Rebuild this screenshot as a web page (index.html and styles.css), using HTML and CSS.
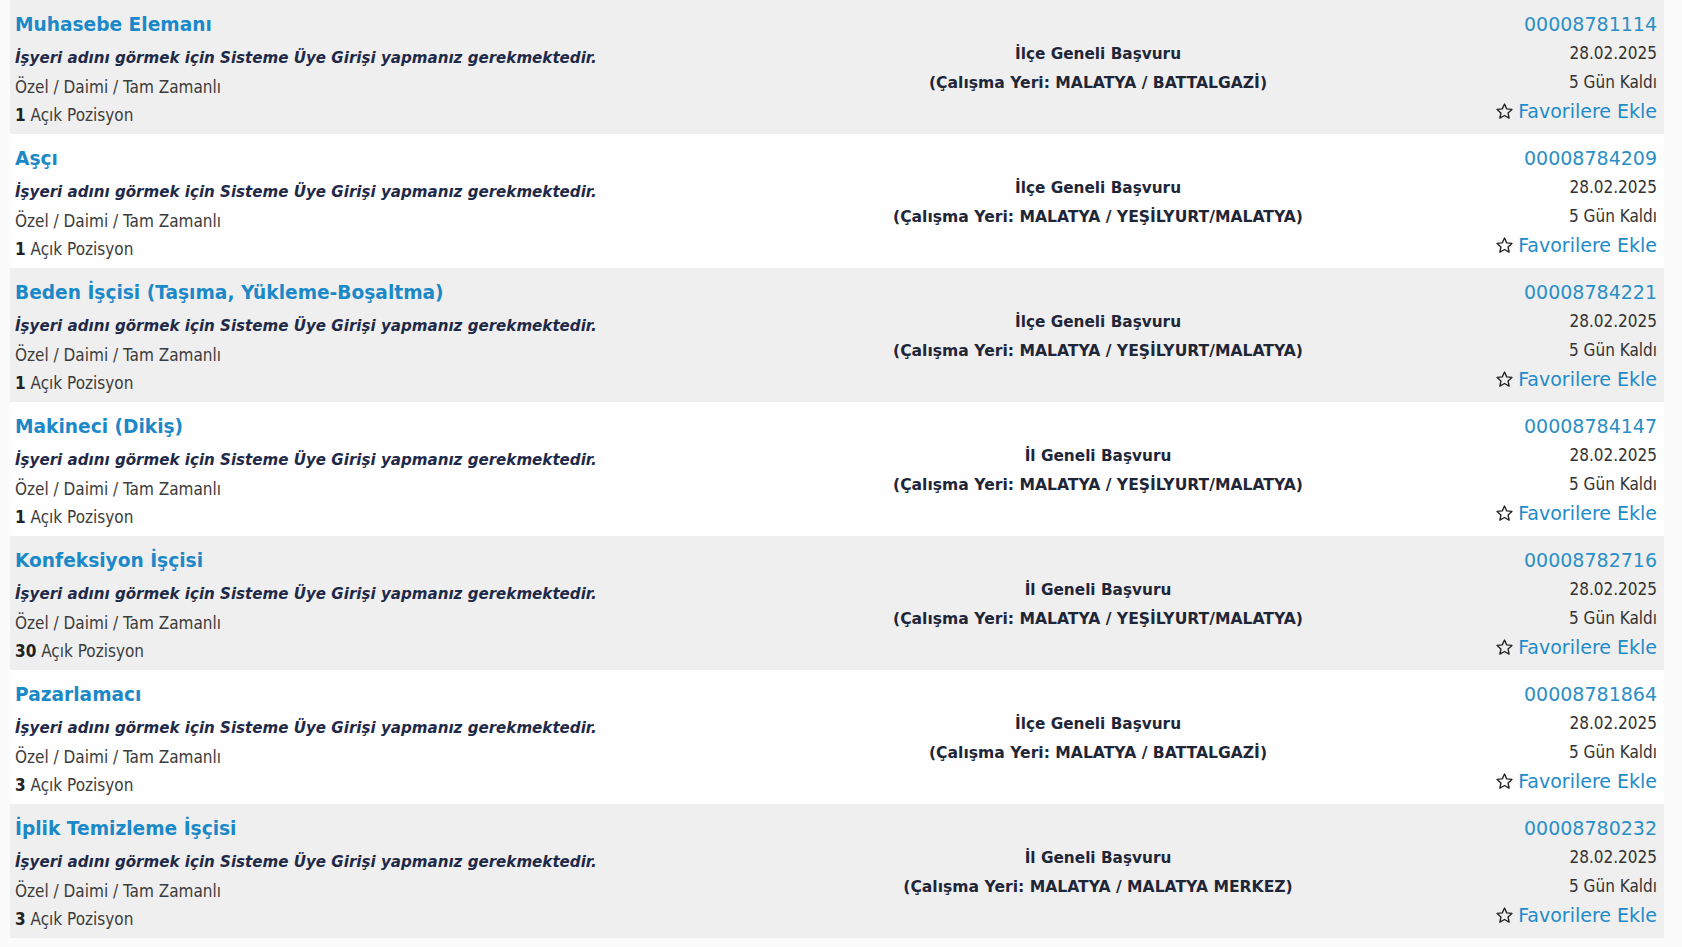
FILE: index.html
```html
<!DOCTYPE html>
<html lang="tr">
<head>
<meta charset="utf-8">
<title>İş İlanları</title>
<link rel="stylesheet" href="styles.css">
</head>
<body>
<div class="page">
  <div class="list">

    <div class="job grey">
      <div class="col-left">
        <a class="title" href="#">Muhasebe Elemanı</a>
        <div class="employer">İşyeri adını görmek için Sisteme Üye Girişi yapmanız gerekmektedir.</div>
        <div class="type">Özel / Daimi / Tam Zamanlı</div>
        <div class="pos"><b>1</b> Açık Pozisyon</div>
      </div>
      <div class="col-mid">
        <div>İlçe Geneli Başvuru</div>
        <div class="place">(Çalışma Yeri: MALATYA / BATTALGAZİ)</div>
      </div>
      <div class="col-right">
        <a class="no" href="#">00008781114</a>
        <div class="date">28.02.2025</div>
        <div class="date">5 Gün Kaldı</div>
        <a class="fav" href="#"><svg class="star" viewBox="0 0 24 24"><path d="M12 2.6l2.8 6.1 6.6.7-4.9 4.5 1.4 6.5L12 17.1l-5.9 3.3 1.4-6.5-4.9-4.5 6.6-.7z"/></svg>Favorilere Ekle</a>
      </div>
    </div>

    <div class="job white">
      <div class="col-left">
        <a class="title" href="#">Aşçı</a>
        <div class="employer">İşyeri adını görmek için Sisteme Üye Girişi yapmanız gerekmektedir.</div>
        <div class="type">Özel / Daimi / Tam Zamanlı</div>
        <div class="pos"><b>1</b> Açık Pozisyon</div>
      </div>
      <div class="col-mid">
        <div>İlçe Geneli Başvuru</div>
        <div class="place">(Çalışma Yeri: MALATYA / YEŞİLYURT/MALATYA)</div>
      </div>
      <div class="col-right">
        <a class="no" href="#">00008784209</a>
        <div class="date">28.02.2025</div>
        <div class="date">5 Gün Kaldı</div>
        <a class="fav" href="#"><svg class="star" viewBox="0 0 24 24"><path d="M12 2.6l2.8 6.1 6.6.7-4.9 4.5 1.4 6.5L12 17.1l-5.9 3.3 1.4-6.5-4.9-4.5 6.6-.7z"/></svg>Favorilere Ekle</a>
      </div>
    </div>

    <div class="job grey">
      <div class="col-left">
        <a class="title" href="#">Beden İşçisi (Taşıma, Yükleme-Boşaltma)</a>
        <div class="employer">İşyeri adını görmek için Sisteme Üye Girişi yapmanız gerekmektedir.</div>
        <div class="type">Özel / Daimi / Tam Zamanlı</div>
        <div class="pos"><b>1</b> Açık Pozisyon</div>
      </div>
      <div class="col-mid">
        <div>İlçe Geneli Başvuru</div>
        <div class="place">(Çalışma Yeri: MALATYA / YEŞİLYURT/MALATYA)</div>
      </div>
      <div class="col-right">
        <a class="no" href="#">00008784221</a>
        <div class="date">28.02.2025</div>
        <div class="date">5 Gün Kaldı</div>
        <a class="fav" href="#"><svg class="star" viewBox="0 0 24 24"><path d="M12 2.6l2.8 6.1 6.6.7-4.9 4.5 1.4 6.5L12 17.1l-5.9 3.3 1.4-6.5-4.9-4.5 6.6-.7z"/></svg>Favorilere Ekle</a>
      </div>
    </div>

    <div class="job white">
      <div class="col-left">
        <a class="title" href="#">Makineci (Dikiş)</a>
        <div class="employer">İşyeri adını görmek için Sisteme Üye Girişi yapmanız gerekmektedir.</div>
        <div class="type">Özel / Daimi / Tam Zamanlı</div>
        <div class="pos"><b>1</b> Açık Pozisyon</div>
      </div>
      <div class="col-mid">
        <div>İl Geneli Başvuru</div>
        <div class="place">(Çalışma Yeri: MALATYA / YEŞİLYURT/MALATYA)</div>
      </div>
      <div class="col-right">
        <a class="no" href="#">00008784147</a>
        <div class="date">28.02.2025</div>
        <div class="date">5 Gün Kaldı</div>
        <a class="fav" href="#"><svg class="star" viewBox="0 0 24 24"><path d="M12 2.6l2.8 6.1 6.6.7-4.9 4.5 1.4 6.5L12 17.1l-5.9 3.3 1.4-6.5-4.9-4.5 6.6-.7z"/></svg>Favorilere Ekle</a>
      </div>
    </div>

    <div class="job grey">
      <div class="col-left">
        <a class="title" href="#">Konfeksiyon İşçisi</a>
        <div class="employer">İşyeri adını görmek için Sisteme Üye Girişi yapmanız gerekmektedir.</div>
        <div class="type">Özel / Daimi / Tam Zamanlı</div>
        <div class="pos"><b>30</b> Açık Pozisyon</div>
      </div>
      <div class="col-mid">
        <div>İl Geneli Başvuru</div>
        <div class="place">(Çalışma Yeri: MALATYA / YEŞİLYURT/MALATYA)</div>
      </div>
      <div class="col-right">
        <a class="no" href="#">00008782716</a>
        <div class="date">28.02.2025</div>
        <div class="date">5 Gün Kaldı</div>
        <a class="fav" href="#"><svg class="star" viewBox="0 0 24 24"><path d="M12 2.6l2.8 6.1 6.6.7-4.9 4.5 1.4 6.5L12 17.1l-5.9 3.3 1.4-6.5-4.9-4.5 6.6-.7z"/></svg>Favorilere Ekle</a>
      </div>
    </div>

    <div class="job white">
      <div class="col-left">
        <a class="title" href="#">Pazarlamacı</a>
        <div class="employer">İşyeri adını görmek için Sisteme Üye Girişi yapmanız gerekmektedir.</div>
        <div class="type">Özel / Daimi / Tam Zamanlı</div>
        <div class="pos"><b>3</b> Açık Pozisyon</div>
      </div>
      <div class="col-mid">
        <div>İlçe Geneli Başvuru</div>
        <div class="place">(Çalışma Yeri: MALATYA / BATTALGAZİ)</div>
      </div>
      <div class="col-right">
        <a class="no" href="#">00008781864</a>
        <div class="date">28.02.2025</div>
        <div class="date">5 Gün Kaldı</div>
        <a class="fav" href="#"><svg class="star" viewBox="0 0 24 24"><path d="M12 2.6l2.8 6.1 6.6.7-4.9 4.5 1.4 6.5L12 17.1l-5.9 3.3 1.4-6.5-4.9-4.5 6.6-.7z"/></svg>Favorilere Ekle</a>
      </div>
    </div>

    <div class="job grey">
      <div class="col-left">
        <a class="title" href="#">İplik Temizleme İşçisi</a>
        <div class="employer">İşyeri adını görmek için Sisteme Üye Girişi yapmanız gerekmektedir.</div>
        <div class="type">Özel / Daimi / Tam Zamanlı</div>
        <div class="pos"><b>3</b> Açık Pozisyon</div>
      </div>
      <div class="col-mid">
        <div>İl Geneli Başvuru</div>
        <div class="place">(Çalışma Yeri: MALATYA / MALATYA MERKEZ)</div>
      </div>
      <div class="col-right">
        <a class="no" href="#">00008780232</a>
        <div class="date">28.02.2025</div>
        <div class="date">5 Gün Kaldı</div>
        <a class="fav" href="#"><svg class="star" viewBox="0 0 24 24"><path d="M12 2.6l2.8 6.1 6.6.7-4.9 4.5 1.4 6.5L12 17.1l-5.9 3.3 1.4-6.5-4.9-4.5 6.6-.7z"/></svg>Favorilere Ekle</a>
      </div>
    </div>

  </div>
</div>
</body>
</html>
```

FILE: styles.css
```css
html, body {
  margin: 0;
  padding: 0;
}

body {
  background: #fbfbfb;
  font-family: "DejaVu Sans", Verdana, sans-serif;
  color: #333;
}

.page {
  padding: 0 18px 8px 10px;
}

.list {
  display: flex;
  flex-direction: column;
}

.job {
  display: grid;
  grid-template-columns: 822px 522px 1fr;
  height: 134px;
  box-sizing: border-box;
  padding: 10px 7px 4px 5px;
}

.job.grey {
  background: #efefef;
}

.job.white {
  background: #fefefe;
}

.col-left {
  display: flex;
  flex-direction: column;
  align-items: flex-start;
}

.title {
  font-weight: bold;
  font-size: 18.6px;
  line-height: 29px;
  color: #1b88c8;
  text-decoration: none;
  white-space: nowrap;
}

.employer {
  margin-top: 5px;
  font-weight: bold;
  font-style: italic;
  font-size: 15.1px;
  line-height: 29px;
  color: #1e2a48;
  white-space: nowrap;
}

.type,
.pos {
  font-family: "DejaVu Sans Condensed", "DejaVu Sans", sans-serif;
  font-size: 17px;
  line-height: 28px;
  color: #3c3c3c;
  white-space: nowrap;
}

.pos b {
  color: #222;
}

.col-mid {
  display: flex;
  flex-direction: column;
  justify-content: center;
  align-items: center;
  padding-bottom: 3px;
  font-weight: bold;
  font-size: 15.3px;
  line-height: 29px;
  color: #1f2638;
  white-space: nowrap;
}

.place {
  font-size: 15.6px;
}

.col-right {
  display: flex;
  flex-direction: column;
  align-items: flex-end;
}

.no {
  font-size: 19px;
  line-height: 29px;
  color: #2a8fc6;
  text-decoration: none;
}

.date {
  font-family: "DejaVu Sans Condensed", "DejaVu Sans", sans-serif;
  font-size: 17px;
  line-height: 29px;
  color: #333;
}

.fav {
  display: flex;
  align-items: center;
  gap: 4px;
  font-size: 19px;
  line-height: 29px;
  color: #1f8bc8;
  text-decoration: none;
}

.star {
  width: 19px;
  height: 19px;
  fill: none;
  stroke: #222;
  stroke-width: 1.7;
  stroke-linejoin: round;
}
```
